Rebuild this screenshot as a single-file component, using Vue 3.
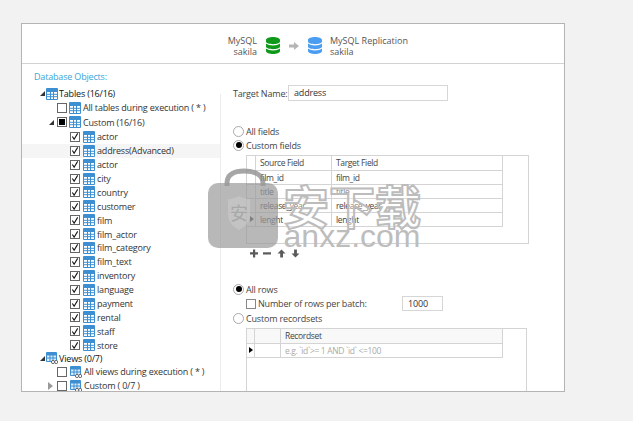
<script setup>
const tables = [
  "actor", "address(Advanced)", "actor", "city", "country", "customer", "film", "film_actor",
  "film_category", "film_text", "inventory", "language", "payment", "rental", "staff", "store",
];

const rows = [
  { label: "Tables (16/16)", kind: "top", arrow: "open", icon: "table" },
  { label: "All tables during execution ( * )", kind: "sub", check: "off", icon: "table" },
  { label: "Custom (16/16)", kind: "sub", arrow: "open", check: "mixed", icon: "table" },
  ...tables.map((name) => ({ label: name, kind: "leaf", check: "on", icon: "table", active: name.includes("Advanced") })),
  { label: "Views (0/7)", kind: "top views", arrow: "open", icon: "view" },
  { label: "All views during execution ( * )", kind: "sub wide", check: "off", icon: "view" },
  { label: "Custom ( 0/7 )", kind: "sub wide", arrow: "closed", check: "off", icon: "view" },
];

const fields = [
  ["film_id", "film_id"],
  ["title", "title"],
  ["release_year", "release_year"],
  ["lenght", "lenght"],
];
</script>

<template>
  <svg class="defs" width="0" height="0">
    <symbol id="tbl" viewBox="0 0 12 12">
      <rect x="0" y="0" width="12" height="12" rx="1" fill="#3d8fd1" />
      <path d="M1 4h10v7H1z" fill="#fff" />
      <path d="M4.5 3.5v8M7.5 3.5v8M1 6.3h10M1 8.7h10" stroke="#3d8fd1" stroke-width="1" />
    </symbol>
    <symbol id="vw" viewBox="0 0 12 12">
      <rect x="0" y="0" width="11" height="10" rx="1" fill="#3d8fd1" />
      <path d="M1 3.5h9v5.5H1z" fill="#dcebf7" />
      <path d="M4 3v6M7 3v6M1 6h9" stroke="#3d8fd1" stroke-width="1" />
      <circle cx="7" cy="10" r="1.6" fill="#fff" stroke="#666" />
      <circle cx="10.2" cy="10" r="1.6" fill="#fff" stroke="#666" />
    </symbol>
    <symbol id="db" viewBox="0 0 14 17">
      <path d="M0 3c0-4 14-4 14 0v1.500c0 3.500-14 3.500-14 0zM0 6.500c3 2.600 11 2.600 14 0v3c0 3.500-14 3.500-14 0zM0 11.500c3 2.600 11 2.600 14 0V14c0 4-14 4-14 0z" />
    </symbol>
  </svg>

  <div class="window">
    <header class="head">
      <div class="conn right"><span>MySQL</span><span>sakila</span></div>
      <svg class="db green" width="14" height="17"><use href="#db" /></svg>
      <svg class="flow" width="10" height="8" viewBox="0 0 10 8"><path d="M0 2.500h5V0l5 4-5 4V5.500H0z" fill="#b5b5b5" /></svg>
      <svg class="db blue" width="14" height="17"><use href="#db" /></svg>
      <div class="conn"><span>MySQL Replication</span><span>sakila</span></div>
    </header>

    <div class="body">
      <aside class="objects">
        <h2>Database Objects:</h2>
        <ul class="tree">
          <li v-for="(row, i) in rows" :key="i" class="row" :class="[row.kind, { active: row.active }]">
            <i v-if="row.arrow" class="arrow" :class="row.arrow"></i>
            <span v-if="row.check" class="check" :class="row.check">
              <svg v-if="row.check === 'on'" width="9" height="9" viewBox="0 0 9 9"><path d="M1.500 4.500l2 3L7.500 1" fill="none" stroke="#111" stroke-width="1.200" /></svg>
            </span>
            <svg class="icon" width="12" height="12"><use :href="row.icon === 'table' ? '#tbl' : '#vw'" /></svg>
            <span class="label">{{ row.label }}</span>
          </li>
        </ul>
      </aside>

      <main class="detail">
        <div class="target">
          <label>Target Name:</label>
          <div class="input name">address</div>
        </div>

        <div class="opt first"><span class="radio"></span>All fields</div>
        <div class="opt"><span class="radio on"></span>Custom fields</div>

        <div class="grid fields">
          <div class="line head-line">
            <span></span><span>Source Field</span><span>Target Field</span>
          </div>
          <div v-for="(f, i) in fields" :key="i" class="line">
            <span class="mark"><i v-if="i === 3"></i></span><span>{{ f[0] }}</span><span>{{ f[1] }}</span>
          </div>
        </div>

        <div class="tools">
          <svg width="56" height="9" viewBox="0 0 56 9" fill="#5a5a5a">
            <path d="M3 3.300V0.500h2.200v2.800H8v2.200H5.200v3H3v-3H0V3.300z" />
            <path d="M13 3.300h8v2.200h-8z" />
            <path d="M27.500 4.500L31.500 0.500l4 4H33V8.500h-2.800V4.500z" />
            <path d="M41.500 4.500h2.600V0.500h2.800v4h2.600L45.500 8.500z" />
          </svg>
        </div>

        <div class="opt rows"><span class="radio on"></span>All rows</div>
        <div class="batch">
          <span class="box"></span>
          <span class="batch-label">Number of rows per batch:</span>
          <div class="input size">1000</div>
        </div>
        <div class="opt custom"><span class="radio"></span>Custom recordsets</div>

        <div class="grid records">
          <div class="rec-line rec-head"><span></span><span></span><span>Recordset</span></div>
          <div class="rec-line">
            <span class="mark"><i class="dark"></i></span><span></span>
            <span class="hint">e.g. `id`&gt;= 1 AND `id` &lt;=100</span>
          </div>
        </div>
      </main>
    </div>
  </div>

  <div class="watermark">
    <svg class="lock" width="72" height="82" viewBox="0 0 72 82">
      <path d="M19 18V15C19 6 27 3 36 3s19 3 19 12v3" fill="none" stroke="#909090" stroke-opacity=".8" stroke-width="5" />
      <rect x="0" y="15" width="70" height="65" rx="10" fill="#9a9a9a" fill-opacity=".7" />
      <path d="M20 31c6 0 8-2 11-3 3 1 5 3 11 3v15c0 9-6 13-11 16-5-3-11-7-11-16z" fill="#d0d0d0" fill-opacity=".45" />
      <text x="31" y="52" text-anchor="middle" class="shield">安</text>
    </svg>
    <div class="brand">
      <div class="cn">安下载</div>
      <div class="en">anxz.com</div>
    </div>
  </div>
</template>

<style>
html,
body {
  background: #f2f2f2;
}
</style>

<style scoped>
.defs {
  position: absolute;
}

.window {
  box-sizing: border-box;
  width: 544px;
  height: 369px;
  margin: 23px 0 0 21px;
  border: 1px solid #b4b4b4;
  background: #fff;
  overflow: hidden;
  font-family: "Open Sans", "Noto Sans", sans-serif;
  font-size: 9px;
  letter-spacing: -0.180px;
  color: #444;
}

.head {
  display: flex;
  align-items: center;
  box-sizing: border-box;
  height: 40px;
  padding-top: 4px;
  padding-left: 205px;
  border-bottom: 1px solid #d2d2d2;
}

.conn {
  display: flex;
  flex-direction: column;
  letter-spacing: 0;
  line-height: 11px;
  color: #555;
}

.conn.right {
  align-items: flex-end;
  width: 30px;
}

.db {
  flex: none;
}

.db.green {
  margin-left: 9px;
  fill: #0f991a;
}

.db.blue {
  margin-left: 9px;
  margin-right: 8px;
  fill: #4a9df0;
}

.flow {
  margin-left: 9px;
}

.body {
  display: flex;
}

.objects {
  width: 198px;
  flex: none;
}

.objects h2 {
  margin: 7px 0 3px 12px;
  font-size: 9px;
  line-height: 12px;
  font-weight: 400;
  color: #3ba5d8;
}

.tree {
  margin: 0;
  padding: 0;
  list-style: none;
  color: #333;
}

.row {
  position: relative;
  display: flex;
  align-items: center;
  height: 13.900px;
  white-space: nowrap;
}

.row:first-child,
.row:nth-child(3) {
  height: 15px;
}

.row.active {
  background: #f5f5f5;
}

.row.views {
  margin-top: -1px;
}

.top {
  padding-left: 24px;
  color: #111;
}

.sub {
  padding-left: 35px;
}

.leaf {
  padding-left: 48px;
}

.arrow {
  position: absolute;
  width: 0;
  height: 0;
}

.arrow.open {
  border-style: solid;
  border-width: 0 0 5px 5px;
  border-color: transparent transparent #333;
}

.top .arrow {
  left: 18px;
}

.sub .arrow {
  left: 27px;
}

.arrow.closed {
  left: 26px !important;
  border-style: solid;
  border-width: 4px 0 4px 5px;
  border-color: transparent transparent transparent #999;
}

.check {
  display: flex;
  align-items: center;
  justify-content: center;
  box-sizing: border-box;
  flex: none;
  width: 10px;
  height: 10px;
  border: 1px solid #666;
  background: #fff;
}

.check.mixed::before {
  content: "";
  width: 6px;
  height: 6px;
  background: #000;
}

.icon {
  flex: none;
  margin-left: 2px;
}

.leaf .icon {
  margin-left: 3px;
}

.label {
  margin-left: 2px;
}

.wide .icon {
  margin-left: 3px;
}

.top .icon {
  margin-left: 0;
}

.top .label {
  margin-left: 1px;
}

.detail {
  flex: 1;
  position: relative;
  margin-top: 30px;
  padding-left: 12px;
  border-left: 1px solid #ececec;
  height: 300px;
  color: #444;
}

.target {
  display: flex;
  align-items: center;
  margin-top: -9px;
}

.target label {
  width: 55px;
  white-space: nowrap;
}

.input {
  box-sizing: border-box;
  border: 1px solid #d6d6d6;
  padding-left: 5px;
  background: #fff;
  color: #333;
}

.name {
  width: 160px;
  height: 16px;
  line-height: 14px;
}

.opt {
  display: flex;
  align-items: center;
  gap: 2px;
  height: 14px;
}

.opt.first {
  margin-top: 23px;
}

.radio {
  display: flex;
  align-items: center;
  justify-content: center;
  box-sizing: border-box;
  width: 11px;
  height: 11px;
  border: 1px solid #aaa;
  border-radius: 50%;
}

.radio.on::before {
  content: "";
  width: 6px;
  height: 6px;
  border-radius: 50%;
  background: #000;
}

.grid {
  box-sizing: border-box;
  margin-left: 13px;
  border: 1px solid #d4d4d4;
  font-size: 8.500px;
  letter-spacing: -0.350px;
}

.fields {
  width: 283px;
  height: 89px;
  margin-top: 3px;
}

.line,
.rec-line {
  display: grid;
  box-sizing: border-box;
  height: 14px;
  border-bottom: 1px solid #d4d4d4;
  line-height: 13px;
}

.line {
  grid-template-columns: 9px 76px 169px;
  width: 256px;
  border-right: 1px solid #d4d4d4;
}

.head-line {
  height: 15px;
}

.line span,
.rec-line span {
  display: block;
  position: relative;
  padding-left: 4px;
  border-right: 1px solid #d4d4d4;
  white-space: nowrap;
  overflow: hidden;
}

.line span:last-child,
.rec-line span:last-child {
  border-right: 0;
}

.line span:first-child,
.rec-line span:first-child {
  padding-left: 0;
}

.mark i {
  position: absolute;
  top: 3px;
  left: 3px;
  border-style: solid;
  border-width: 3.500px 0 3.500px 4px;
  border-color: transparent transparent transparent #444;
}

.mark i.dark {
  left: 2px;
  border-left-color: #000;
}

.tools {
  display: flex;
  height: 9px;
  margin: 5px 0 0 17px;
}

.opt.rows {
  margin-top: 24px;
}

.batch {
  display: flex;
  align-items: center;
  height: 15px;
  margin-left: 13px;
}

.box {
  box-sizing: border-box;
  width: 10px;
  height: 10px;
  border: 1px solid #888;
}

.batch-label {
  width: 144px;
  margin-left: 2px;
}

.size {
  width: 41px;
  height: 15px;
  line-height: 13px;
}

.opt.custom {
  margin-top: 0;
}

.records {
  width: 281px;
  height: 70px;
  margin-top: 3px;
}

.rec-line {
  grid-template-columns: 8px 26px 220px;
  width: 256px;
  border-right: 1px solid #d4d4d4;
}

.rec-head {
  height: 15px;
  background: #f8f8f8;
}

.hint {
  color: #aaa;
}

.watermark {
  position: absolute;
  top: 168px;
  left: 208px;
  display: flex;
  pointer-events: none;
}

.shield {
  font-family: "Noto Sans CJK SC", sans-serif;
  font-size: 18px;
  fill: #a8a8a8;
}

.brand {
  margin-left: 2px;
  margin-top: 13px;
  text-align: center;
  width: 140px;
}

.cn {
  font-family: "Noto Sans CJK SC", sans-serif;
  font-size: 46px;
  font-weight: 700;
  line-height: 46px;
  color: rgba(255, 255, 255, 0.35);
  -webkit-text-stroke: 2px #bcbcbc;
}

.en {
  margin-top: -5px;
  font-family: "Liberation Sans", sans-serif;
  font-size: 32px;
  line-height: 28px;
  color: #bdbdbd;
}
</style>
